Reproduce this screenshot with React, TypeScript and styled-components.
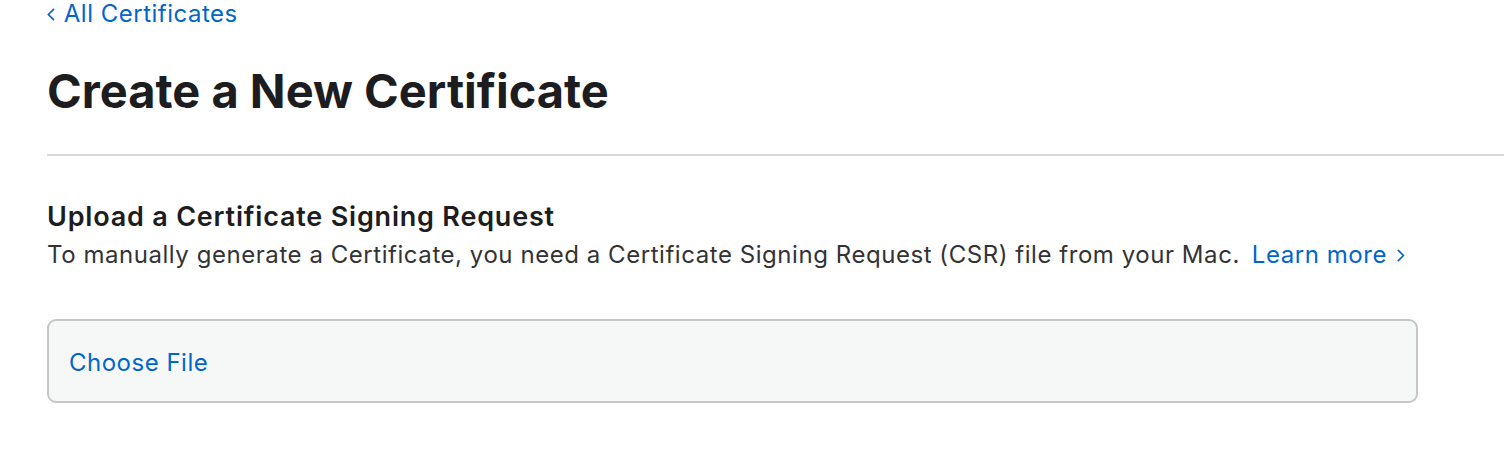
import React from "react";
import styled, { createGlobalStyle } from "styled-components";

const Global = createGlobalStyle`
  html, body { margin: 0; padding: 0; background: #fff; }
  body { font-family: Inter, "Noto Sans", sans-serif; -webkit-font-smoothing: antialiased; }
`;

const Page = styled.div`
  padding: 1px 0 0 47px;
  overflow: hidden;
`;

const BackLink = styled.a`
  display: flex;
  align-items: center;
  gap: 9px;
  height: 26px;
  color: #0066cc;
  font-size: 24px;
  line-height: 26px;
  letter-spacing: 0.5px;
  text-decoration: none;
`;

const Title = styled.h1`
  margin: 38px 0 0;
  font-size: 47px;
  line-height: 52px;
  font-weight: 700;
  letter-spacing: 0px;
  color: #1d1d1f;
`;

const Divider = styled.hr`
  margin: 37px 0 0;
  border: none;
  height: 2px;
  background: #d9d9dc;
`;

const Section = styled.section`
  padding-top: 45px;
`;

const SectionTitle = styled.h2`
  margin: 0;
  font-size: 27px;
  line-height: 32px;
  font-weight: 600;
  color: #1d1d1f;
  letter-spacing: 0.8px;
`;

const Description = styled.p`
  margin: 7px 0 0;
  font-size: 24px;
  line-height: 30px;
  color: #333336;
  display: flex;
  gap: 12px;
  letter-spacing: 0.55px;
`;

const InlineLink = styled.a`
  color: #0066cc;
  text-decoration: none;
  display: inline-flex;
  align-items: center;
  gap: 10px;
`;

const FileBox = styled.div`
  margin-top: 49px;
  width: 1371px;
  height: 84px;
  box-sizing: border-box;
  border: 2px solid #c6c6c8;
  border-radius: 9px;
  background: #f6f8f8;
  display: flex;
  align-items: center;
  padding: 2px 0 0 20px;
`;

const FileButton = styled.span`
  color: #0066cc;
  font-size: 24px;
  letter-spacing: 0.5px;
`;

const Chevron = ({ dir = "left", size = 12 }: { dir?: "left" | "right"; size?: number }) => (
  <svg width={size * 0.6} height={size} viewBox="0 0 6 10" fill="none">
    <path
      d={dir === "left" ? "M5 1 L1 5 L5 9" : "M1 1 L5 5 L1 9"}
      stroke="currentColor"
      strokeWidth="1.3"
      strokeLinecap="round"
      strokeLinejoin="round"
    />
  </svg>
);

export default function App() {
  return (
    <>
      <Global />
      <Page>
        <BackLink href="#">
          <Chevron dir="left" size={13} />
          All Certificates
        </BackLink>
        <Title>Create a New Certificate</Title>
        <Divider />
        <Section>
          <SectionTitle>Upload a Certificate Signing Request</SectionTitle>
          <Description>
            <span>To manually generate a Certificate, you need a Certificate Signing Request (CSR) file from your Mac.</span>
            <InlineLink href="#">
              Learn more
              <Chevron dir="right" size={13} />
            </InlineLink>
          </Description>
          <FileBox>
            <FileButton>Choose File</FileButton>
          </FileBox>
        </Section>
      </Page>
    </>
  );
}
